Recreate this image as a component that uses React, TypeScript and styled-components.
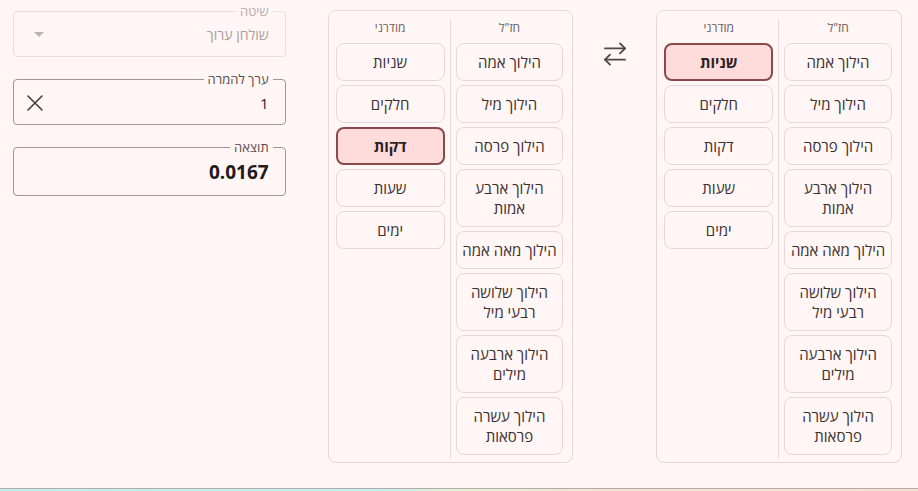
import React from "react";
import styled, { createGlobalStyle, css } from "styled-components";

const GlobalStyle = createGlobalStyle`
  html, body {
    margin: 0;
    padding: 0;
    background: #fff6f5;
  }
  body {
    font-family: "Open Sans", "DejaVu Sans", sans-serif;
    color: #3b3030;
  }
`;

const Shell = styled.div`
  display: flex;
  flex-direction: column;
  height: 100vh;
`;

const Main = styled.main`
  flex: 1;
  direction: rtl;
  display: flex;
  align-items: flex-start;
  padding: 10px 16px 0 13px;
`;

const Footer = styled.footer`
  height: 2px;
  border-top: 1px solid #b3abab;
  background: linear-gradient(90deg, #bdeeee 0%, #c4f0ec 42%, #e4f4d2 50%, #f2e6d2 65%, #f4e2cf 100%);
`;

const Panel = styled.section`
  width: 246px;
  height: 453px;
  box-sizing: border-box;
  border: 1px solid #e6d6d6;
  border-radius: 8px;
  padding: 8px 9px 4px 7px;
  display: grid;
  grid-template-columns: 1fr 1fr;
`;

const Column = styled.div<{ $divider?: boolean }>`
  display: flex;
  flex-direction: column;
  gap: 4px;
  ${(p) =>
    p.$divider
      ? css`
          padding-left: 5px;
          border-left: 1px solid #e9dbdb;
        `
      : css`
          padding-right: 5px;
        `}
`;

const ColumnTitle = styled.div`
  font-size: 12px;
  line-height: 17px;
  color: #6b5d5d;
  text-align: center;
  margin-bottom: 3px;
`;

const UnitButton = styled.button<{ $active?: boolean }>`
  font-family: inherit;
  direction: rtl;
  width: 100%;
  min-height: 38px;
  box-sizing: border-box;
  border-radius: 8px;
  padding: 8px 3px;
  font-size: 15px;
  line-height: 20px;
  color: #3b3030;
  background: transparent;
  border: 1px solid #e6d7d7;
  cursor: pointer;
  ${(p) =>
    p.$active &&
    css`
      background: #ffdcdc;
      border: 2px solid #8b4949;
      padding: 7px 2px;
      font-weight: 700;
      color: #2e2222;
    `}
`;

const SwapArea = styled.div`
  width: 83px;
  display: flex;
  justify-content: center;
  padding-top: 29px;
  color: #554646;
`;

const Fields = styled.div`
  width: 273px;
  margin-right: 42px;
  margin-top: -5px;
  display: flex;
  flex-direction: column;
  gap: 16px;
`;

type Tone = "disabled" | "normal";

const FieldBox = styled.fieldset<{ $tone: Tone; $tall?: boolean }>`
  margin: 0;
  padding: 0 16px 0 12px;
  height: ${(p) => (p.$tall ? 55 : 52)}px;
  box-sizing: border-box;
  border-radius: 4px;
  border: 1px solid ${(p) => (p.$tone === "disabled" ? "#ecdddd" : "#a39393")};
  min-width: 0;
`;

const FieldLabel = styled.legend<{ $tone: Tone }>`
  font-size: 13px;
  line-height: 12px;
  padding: 0 4px;
  margin-right: -4px;
  color: ${(p) => (p.$tone === "disabled" ? "#b9abab" : "#5b4c4c")};
`;

const FieldRow = styled.div<{ $tall?: boolean }>`
  height: ${(p) => (p.$tall ? 42 : 39)}px;
  box-sizing: border-box;
  padding-bottom: 4px;
  display: flex;
  align-items: center;
  justify-content: space-between;
`;

const FieldValue = styled.div<{ $muted?: boolean; $strong?: boolean }>`
  font-size: ${(p) => (p.$strong ? "19px" : p.$muted ? "14px" : "15px")};
  font-weight: ${(p) => (p.$strong ? 700 : 400)};
  color: ${(p) => (p.$muted ? "#ab9e9e" : p.$strong ? "#231a1a" : "#2f2525")};
`;

const Adornment = styled.div<{ $shift?: number }>`
  display: flex;
  align-items: center;
  margin-left: ${(p) => p.$shift ?? 0}px;
`;

const ancient = [
  "הילוך אמה",
  "הילוך מיל",
  "הילוך פרסה",
  "הילוך ארבע אמות",
  "הילוך מאה אמה",
  "הילוך שלושה רבעי מיל",
  "הילוך ארבעה מילים",
  "הילוך עשרה פרסאות",
];

const modern = ["שניות", "חלקים", "דקות", "שעות", "ימים"];

function UnitPanel({ activeModern }: { activeModern: string }) {
  return (
    <Panel>
      <Column $divider>
        <ColumnTitle>חז"ל</ColumnTitle>
        {ancient.map((u) => (
          <UnitButton key={u}>{u}</UnitButton>
        ))}
      </Column>
      <Column>
        <ColumnTitle>מודרני</ColumnTitle>
        {modern.map((u) => (
          <UnitButton key={u} $active={u === activeModern}>
            {u}
          </UnitButton>
        ))}
      </Column>
    </Panel>
  );
}

const SwapIcon = () => (
  <svg width="30" height="30" viewBox="0 0 24 24" fill="none" stroke="currentColor" strokeWidth="1.5" strokeLinecap="round" strokeLinejoin="round">
    <path d="M16 3.5l4 4-4 4" />
    <path d="M20 7.5H4" />
    <path d="M8 20.5l-4-4 4-4" />
    <path d="M4 16.5h16" />
  </svg>
);

const CloseIcon = () => (
  <svg width="18" height="18" viewBox="0 0 18 18" fill="none" stroke="#4a3c3c" strokeWidth="1.6" strokeLinecap="round">
    <path d="M2 2l14 14M16 2L2 16" />
  </svg>
);

const ArrowDown = () => (
  <svg width="10" height="5" viewBox="0 0 10 5">
    <path d="M0 0h10L5 5z" fill="#bdb1b1" />
  </svg>
);

export default function App() {
  return (
    <Shell>
      <GlobalStyle />
      <Main>
        <UnitPanel activeModern="שניות" />
        <SwapArea>
          <SwapIcon />
        </SwapArea>
        <UnitPanel activeModern="דקות" />
        <Fields>
          <FieldBox $tone="disabled">
            <FieldLabel $tone="disabled">שיטה</FieldLabel>
            <FieldRow>
              <FieldValue $muted>שולחן ערוך</FieldValue>
              <Adornment $shift={8}>
                <ArrowDown />
              </Adornment>
            </FieldRow>
          </FieldBox>
          <FieldBox $tone="normal">
            <FieldLabel $tone="normal">ערך להמרה</FieldLabel>
            <FieldRow>
              <FieldValue>1</FieldValue>
              <Adornment>
                <CloseIcon />
              </Adornment>
            </FieldRow>
          </FieldBox>
          <FieldBox $tone="normal" $tall>
            <FieldLabel $tone="normal">תוצאה</FieldLabel>
            <FieldRow $tall>
              <FieldValue $strong>0.0167</FieldValue>
            </FieldRow>
          </FieldBox>
        </Fields>
      </Main>
      <Footer />
    </Shell>
  );
}
